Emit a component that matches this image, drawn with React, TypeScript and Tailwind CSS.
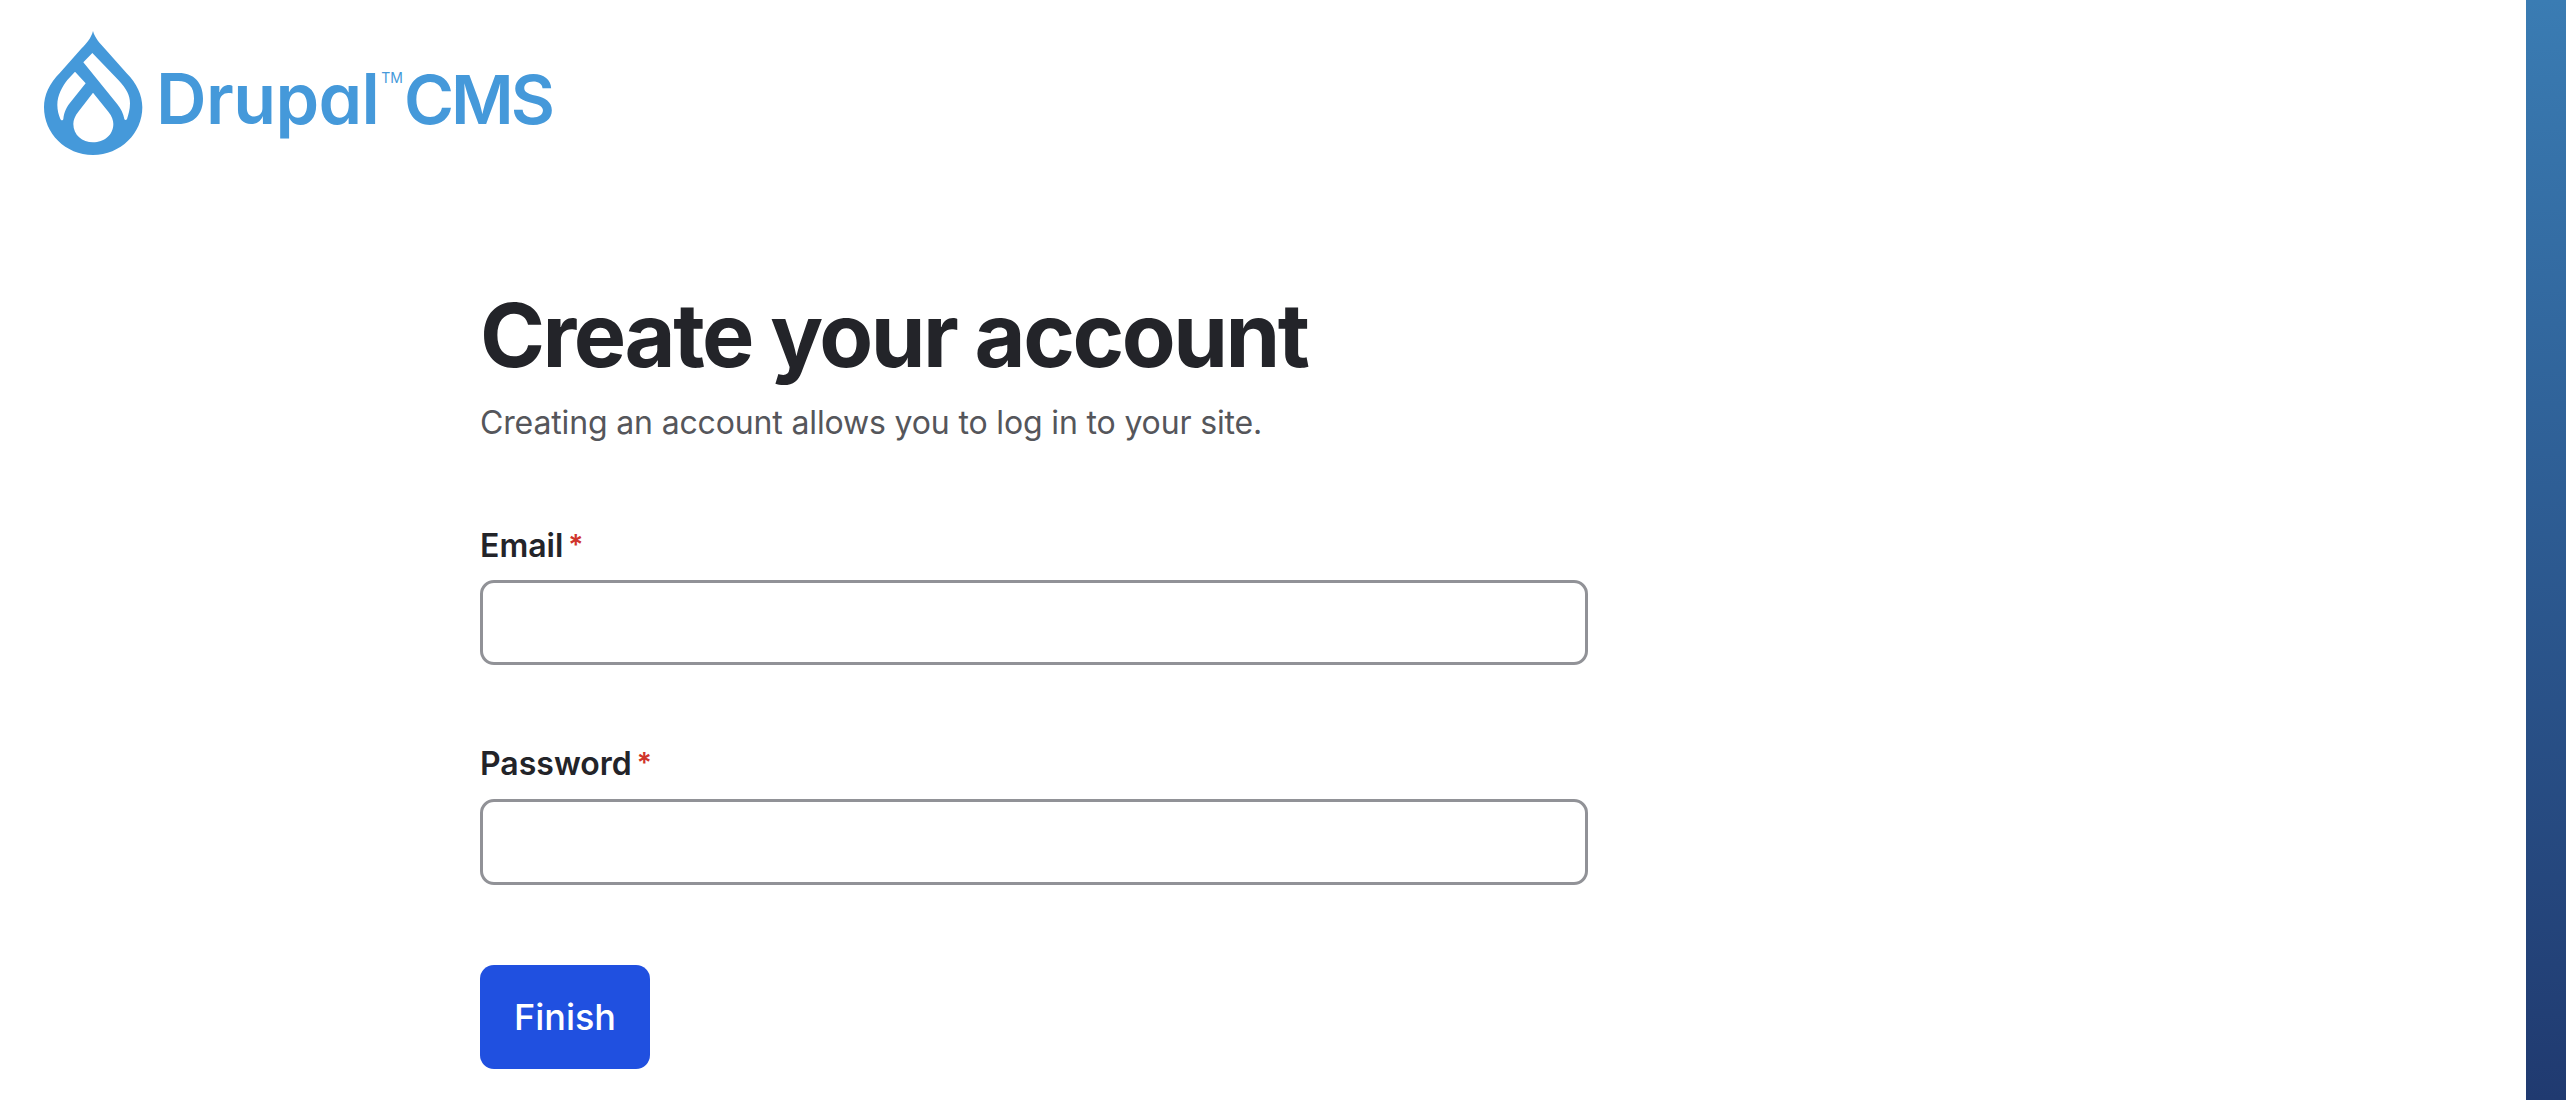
export default function App() {
  return (
    <div className="flex h-screen w-full overflow-hidden bg-white font-['Inter',sans-serif]">
      <main className="flex-1 flex flex-col">
        <header className="flex items-start pl-[30px] pt-[20px]">
          <svg width="130" height="145" viewBox="0 0 390 435" className="shrink-0" aria-label="Drupal logo">
            <path fill="#4599da" d="M189 33C195 55 210 70 222 83L290 160C320 190 337 225 337 262C337 340 272 405 189 405C106 405 42 340 42 262C42 225 58 190 90 158L155 85C170 70 183 55 189 33Z" />
            <path fill="#fff" d="M160 127L187 99L265 180C290 207 300 225 300 250C300 270 295 285 291 297C289 301 284 301 283 297C280 280 273 268 262 253Z" />
            <path fill="#fff" d="M135 155L167 190L125 242C110 260 102 275 100 297C99 302 93 302 91 297C86 285 82 270 82 255C82 225 97 200 112 180Z" />
            <path fill="#fff" d="M189 218L235 275C246 289 250 300 250 312C250 345 222 367 189 367C157 367 130 345 130 312C130 300 135 287 145 275Z" />
          </svg>
          <div className="ml-[-4px] mt-[37px] flex items-baseline text-[#4599da] leading-[84px]">
            <span className="text-[70px] font-semibold tracking-[-0.6px] [font-feature-settings:'cv11']">Drupal</span>
            <span className="ml-[2px] self-start mt-[14px] text-[14px] leading-[14px] font-normal">TM</span>
            <span className="ml-[1px] text-[68px] font-semibold tracking-[-3px]">CMS</span>
          </div>
        </header>
        <form className="ml-[480px] mt-[120px] w-[1108px] flex flex-col">
          <h1 className="text-[88px] leading-[100px] font-bold text-[#232429] tracking-[-2.5px]">Create your account</h1>
          <p className="mt-[14px] text-[32px] leading-[48px] text-[#55565b] tracking-[-0.15px]">Creating an account allows you to log in to your site.</p>
          <label className="mt-[74px] text-[32px] leading-[48px] font-semibold text-[#232429]">
            Email<span className="ml-[5px] text-[28px] text-[#d0342c] align-[2px]">*</span>
          </label>
          <input type="email" className="mt-[10px] h-[85px] rounded-[14px] border-[3px] border-[#919297] bg-white" />
          <label className="mt-[74px] text-[32px] leading-[48px] font-semibold text-[#232429]">
            Password<span className="ml-[5px] text-[28px] text-[#d0342c] align-[2px]">*</span>
          </label>
          <input type="password" className="mt-[11px] h-[86px] rounded-[14px] border-[3px] border-[#919297] bg-white" />
          <button type="button" className="mt-[80px] h-[104px] w-[170px] rounded-[14px] bg-[#2050e0] text-[36px] font-medium text-white">
            Finish
          </button>
        </form>
      </main>
      <aside className="w-[40px] shrink-0 bg-gradient-to-b from-[#3a7cb3] to-[#203a70]" />
    </div>
  );
}
